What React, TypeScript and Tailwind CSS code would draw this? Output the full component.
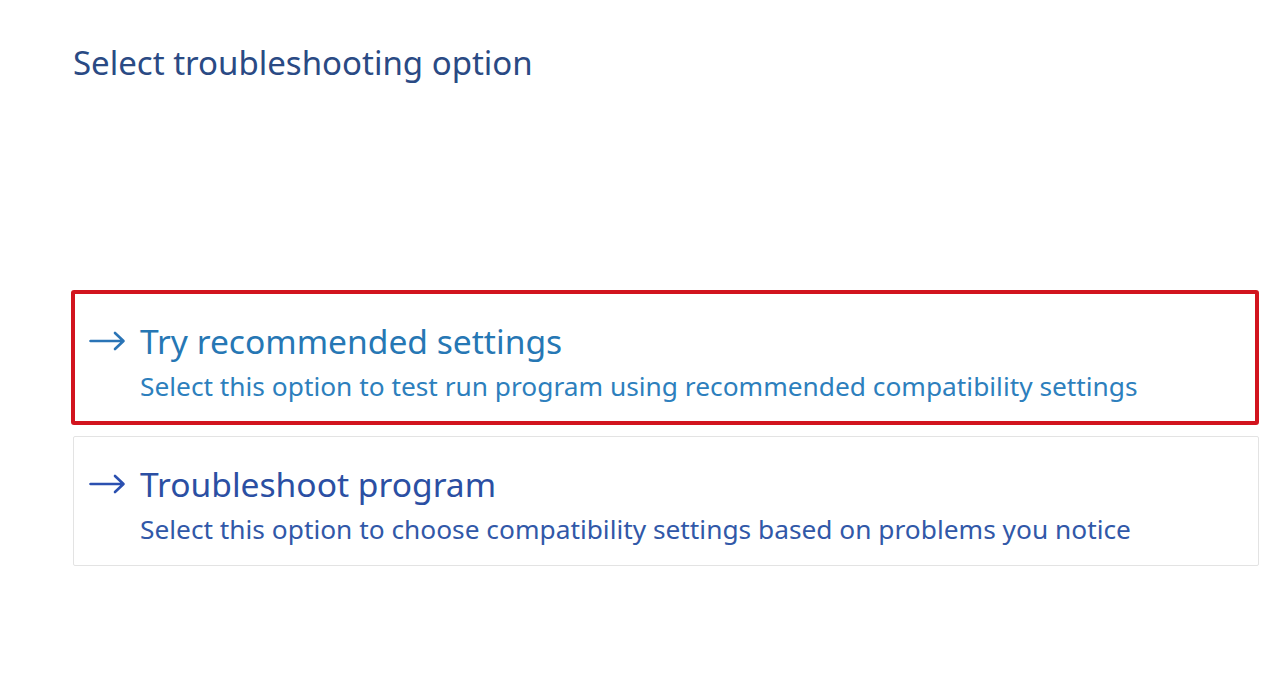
import { ReactNode } from 'react'

function Arrow({ color }: { color: string }) {
  return (
    <svg width="37" height="20" viewBox="0 0 37 20" fill="none" className="shrink-0">
      <path d="M1.5 10H34M26 2L34.5 10L26 18" stroke={color} strokeWidth="2.6" strokeLinecap="round" strokeLinejoin="round" />
    </svg>
  )
}

interface OptionProps {
  title: string
  desc: string
  active?: boolean
}

function Option({ title, desc, active }: OptionProps) {
  const titleColor = active ? 'text-[#2677b4]' : 'text-[#2b4fa3]'
  const descColor = active ? 'text-[#2d7fbd]' : 'text-[#3158a8]'
  const arrowColor = active ? '#2a74b6' : '#2b50b0'
  return (
    <div
      className={
        active
          ? 'rounded-[3px] border-[4px] border-[#d2141e] pl-[14px] pt-[27px] pb-[19px]'
          : 'ml-[2px] rounded-[2px] border border-[#e3e3e3] pl-[15px] pt-[27px] pb-[20px]'
      }
    >
      <div className="flex items-center gap-[14px]">
        <Arrow color={arrowColor} />
        <div className={`text-[33.6px] leading-[40px] ${titleColor}`}>{title}</div>
      </div>
      <div className={`mt-[9px] pl-[51px] text-[26.3px] leading-[32px] ${descColor}`}>{desc}</div>
    </div>
  )
}

function Section({ children }: { children: ReactNode }) {
  return <div className="flex flex-col gap-[11px] pl-[71px] pr-[21px]">{children}</div>
}

export default function App() {
  return (
    <main className="h-[697px] w-[1280px] overflow-hidden bg-white font-['Noto_Sans','Open_Sans',sans-serif]">
      <h1 className="pl-[73px] pt-[40px] text-[33px] leading-[46px] text-[#2a4a84]">Select troubleshooting option</h1>
      <div className="h-[204px]" />
      <Section>
        <Option
          active
          title="Try recommended settings"
          desc="Select this option to test run program using recommended compatibility settings"
        />
        <Option
          title="Troubleshoot program"
          desc="Select this option to choose compatibility settings based on problems you notice"
        />
      </Section>
    </main>
  )
}
